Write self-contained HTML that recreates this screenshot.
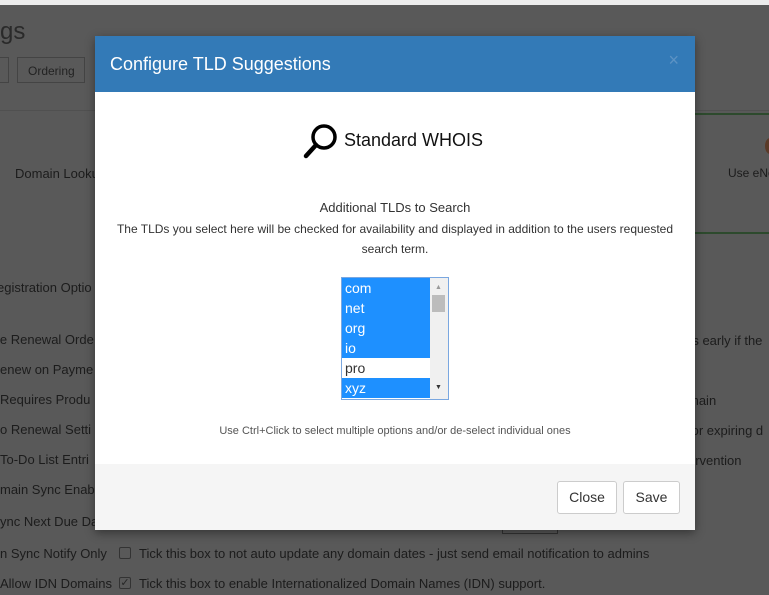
<!DOCTYPE html>
<html><head><style>
*{margin:0;padding:0;box-sizing:border-box}
body{width:769px;height:595px;overflow:hidden;background:#595959;font-family:"Liberation Sans",sans-serif;position:relative;color:#262626}
.t{position:absolute;font-size:13px;white-space:nowrap;color:#1c1c1c}
.top{position:absolute;left:0;top:0;width:769px;height:5px;background:#ececec}
.modal{position:absolute;left:95px;top:36px;width:600px;height:494px;background:#fff;box-shadow:0 3px 9px rgba(0,0,0,.4)}
.hd{height:56px;background:#337ab7;color:#fff;font-size:18px;padding:18px 15px}
.x{position:absolute;right:16px;top:14px;color:#5d93c4;font-size:18px}
.ft{position:absolute;left:0;bottom:0;width:600px;height:66px;background:#f5f5f5}
.btn{position:absolute;top:17px;height:33px;border:1px solid #ccc;border-radius:3px;background:#fff;font-size:14px;color:#333;text-align:center;line-height:31px}
.list{position:absolute;left:246px;top:241px;width:108px;height:123px;border:1px solid #7aa7e0;background:#fff;overflow:hidden}
.o{height:20px;width:88px;font-size:14px;line-height:20px;padding-left:3px;background:#1e90ff;color:#fff}
.o.w{background:#fff;color:#333}
.sb{position:absolute;right:0;top:0;width:18px;height:121px;background:#f0f0f0}
</style></head><body>
<div class="top"></div>
<div class="t" style="left:0;top:18px;font-size:24px;color:#2a2a2a">gs</div>
<div style="position:absolute;left:-5px;top:57px;width:14px;height:26px;border:1px solid #444"></div>
<div style="position:absolute;left:17px;top:57px;width:68px;height:26px;border:1px solid #444;font-size:12px;padding:6px 0 0 10px;color:#222">Ordering</div>
<div style="position:absolute;left:0;top:110px;width:769px;height:1px;background:#505050"></div>
<div style="position:absolute;left:695px;top:113px;width:74px;height:2px;background:#2d4a2d"></div>
<div style="position:absolute;left:695px;top:232px;width:74px;height:2px;background:#2d4a2d"></div>
<div class="t" style="left:15px;top:166px">Domain Looku</div>
<div class="t" style="left:728px;top:166px;font-size:12px">Use eNo</div>
<div style="position:absolute;left:765px;top:138px;width:10px;height:16px;border-radius:50%;background:#5a3a28"></div>
<div class="t" style="left:-3px;top:280px">egistration Optio</div>
<div class="t" style="left:-3px;top:332px">le Renewal Orde</div>
<div class="t" style="left:0;top:362px">enew on Payme</div>
<div class="t" style="left:0;top:392px">Requires Produ</div>
<div class="t" style="left:0;top:422px">o Renewal Setti</div>
<div class="t" style="left:0;top:452px">To-Do List Entri</div>
<div class="t" style="left:0;top:482px">main Sync Enable</div>
<div class="t" style="left:0;top:514px">ync Next Due Da</div>
<div class="t" style="left:0;top:546px">n Sync Notify Only</div>
<div class="t" style="left:0;top:576px">Allow IDN Domains</div>
<div class="t" style="left:688px;top:333px">rs early if the</div>
<div class="t" style="left:688px;top:393px">main</div>
<div class="t" style="left:688px;top:423px">for expiring d</div>
<div class="t" style="left:688px;top:453px">ervention</div>
<div style="position:absolute;left:502px;top:530px;width:56px;height:4px;border:1px solid #333;border-top:none"></div>
<div style="position:absolute;left:119px;top:547px;width:12px;height:12px;border:1px solid #333;border-radius:2px"></div>
<div class="t" style="left:139px;top:546px">Tick this box to not auto update any domain dates - just send email notification to admins</div>
<div style="position:absolute;left:119px;top:577px;width:12px;height:12px;border:1px solid #333;border-radius:2px;font-size:11px;line-height:10px;text-align:center">✓</div>
<div class="t" style="left:139px;top:576px">Tick this box to enable Internationalized Domain Names (IDN) support.</div>
<div class="modal">
<div class="hd">Configure TLD Suggestions</div>
<div class="x">×</div>
<svg style="position:absolute;left:208px;top:86px" width="36" height="38" viewBox="0 0 36 38"><circle cx="21" cy="15" r="11" fill="none" stroke="#000" stroke-width="3.5"/><line x1="13" y1="23" x2="3" y2="34" stroke="#000" stroke-width="4.5" stroke-linecap="round"/></svg>
<div style="position:absolute;left:249px;top:94px;font-size:18px;color:#111">Standard WHOIS</div>
<div style="position:absolute;left:0;width:600px;top:164px;text-align:center;font-size:13px;color:#333">Additional TLDs to Search</div>
<div style="position:absolute;left:20px;width:560px;top:183px;text-align:center;font-size:12px;line-height:20px;color:#333">The TLDs you select here will be checked for availability and displayed in addition to the users requested search term.</div>
<div class="list"><div class="o">com</div><div class="o">net</div><div class="o">org</div><div class="o">io</div><div class="o w">pro</div><div class="o">xyz</div>
<div class="sb"><div style="position:absolute;left:2px;top:17px;width:13px;height:17px;background:#bcbcbc"></div><div style="position:absolute;left:5px;top:6px;font-size:7px;color:#999">▲</div><div style="position:absolute;left:5px;top:106px;font-size:7px;color:#333">▼</div></div></div>
<div style="position:absolute;left:0;width:600px;top:389px;text-align:center;font-size:11px;color:#555">Use Ctrl+Click to select multiple options and/or de-select individual ones</div>
<div class="ft"><div class="btn" style="left:462px;width:60px">Close</div><div class="btn" style="left:528px;width:57px">Save</div></div>
</div>
</body></html>
